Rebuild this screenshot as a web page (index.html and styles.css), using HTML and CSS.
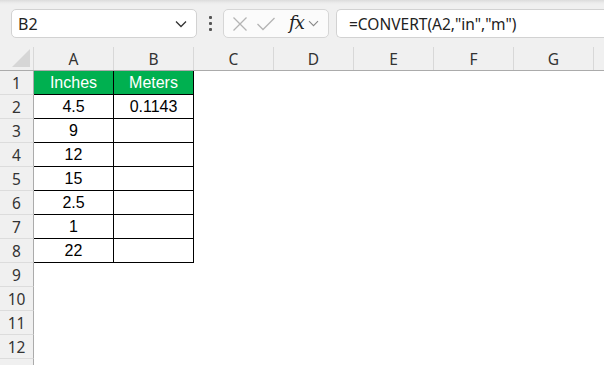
FILE: index.html
```html
<!DOCTYPE html>
<html>
<head>
<meta charset="utf-8">
<link rel="stylesheet" href="styles.css">
</head>
<body>
<div class="topbar">
  <div class="namebox">
    <span class="ref">B2</span>
    <svg class="chev" width="12" height="8" viewBox="0 0 12 8"><path d="M1 1.5 L6 6.5 L11 1.5" fill="none" stroke="#333" stroke-width="1.3"/></svg>
  </div>
  <div class="dots"><i></i><i></i><i></i></div>
  <div class="fxbox">
    <svg class="ico" width="16" height="16" viewBox="0 0 16 16"><path d="M1.5 1.5 L14.5 14.5 M14.5 1.5 L1.5 14.5" stroke="#b4b4b4" stroke-width="1.3" fill="none"/></svg>
    <svg class="ico" width="20" height="16" viewBox="0 0 20 16"><path d="M1.5 8 L7 13.5 L18.5 2" stroke="#b4b4b4" stroke-width="1.3" fill="none"/></svg>
    <span class="fx">fx</span>
    <svg class="chev2" width="11" height="7" viewBox="0 0 11 7"><path d="M1 1.2 L5.5 5.7 L10 1.2" fill="none" stroke="#888" stroke-width="1.1"/></svg>
  </div>
  <div class="formula">=CONVERT(A2,"in","m")</div>
</div>

<div class="sheet">
  <div class="colhead">
    <div class="corner"><svg width="18" height="18" viewBox="0 0 18 18"><path d="M18 0 L18 18 L0 18 Z" fill="#d6d6d6"/></svg></div>
    <div class="col">A</div><div class="col">B</div><div class="col">C</div><div class="col">D</div><div class="col">E</div><div class="col">F</div><div class="col">G</div><div class="col rest"></div>
  </div>

  <div class="row"><div class="rh">1</div><div class="cell ca hdr">Inches</div><div class="cell cb hdr">Meters</div></div>
  <div class="row"><div class="rh">2</div><div class="cell ca">4.5</div><div class="cell cb">0.1143</div></div>
  <div class="row"><div class="rh">3</div><div class="cell ca">9</div><div class="cell cb"></div></div>
  <div class="row"><div class="rh">4</div><div class="cell ca">12</div><div class="cell cb"></div></div>
  <div class="row"><div class="rh">5</div><div class="cell ca">15</div><div class="cell cb"></div></div>
  <div class="row"><div class="rh">6</div><div class="cell ca">2.5</div><div class="cell cb"></div></div>
  <div class="row"><div class="rh">7</div><div class="cell ca">1</div><div class="cell cb"></div></div>
  <div class="row"><div class="rh">8</div><div class="cell ca">22</div><div class="cell cb"></div></div>
  <div class="row"><div class="rh">9</div></div>
  <div class="row"><div class="rh">10</div></div>
  <div class="row"><div class="rh">11</div></div>
  <div class="row"><div class="rh">12</div></div>
  <div class="row"><div class="rh"></div></div>
</div>
</body>
</html>
```

FILE: styles.css
```css
html, body {
  margin: 0;
  padding: 0;
}
body {
  width: 604px;
  height: 365px;
  overflow: hidden;
  background: #ffffff;
  font-family: "Noto Sans", "Open Sans", sans-serif;
}
.topbar {
  height: 47px;
  box-sizing: border-box;
  padding: 9px 0 0 11px;
  display: flex;
  align-items: flex-start;
  background: linear-gradient(#dcdcdc 0px, #ececec 3px, #f0f0f0 5px, #f0f0f0 100%);
  overflow: hidden;
}
.namebox {
  width: 186px;
  height: 29px;
  box-sizing: border-box;
  background: #fff;
  border: 1px solid #d2d2d2;
  border-radius: 5px;
  display: flex;
  align-items: center;
  justify-content: space-between;
  padding: 0 9px 0 6px;
  flex: none;
}
.ref {
  font-size: 16px;
  color: #222;
}
.dots {
  width: 26px;
  height: 29px;
  display: flex;
  flex-direction: column;
  align-items: center;
  justify-content: center;
  gap: 3px;
  flex: none;
}
.dots i {
  display: block;
  width: 3px;
  height: 3px;
  background: #555;
  border-radius: 1px;
}
.fxbox {
  width: 106px;
  height: 29px;
  box-sizing: border-box;
  background: #fbfbfb;
  border: 1px solid #d6d6d6;
  border-radius: 5px;
  display: flex;
  align-items: center;
  padding: 0 0 0 8px;
  gap: 8px;
  flex: none;
}
.fx {
  font-family: "DejaVu Serif", "Liberation Serif", serif;
  font-style: italic;
  font-size: 18px;
  color: #222;
  margin-left: 5px;
  letter-spacing: -1px;
  line-height: 1;
  padding-bottom: 2px;
}
.chev2 {
  margin-left: -4px;
}
.formula {
  margin-left: 7px;
  height: 29px;
  box-sizing: border-box;
  background: #fff;
  border: 1px solid #d2d2d2;
  border-right: none;
  border-radius: 5px 0 0 5px;
  display: flex;
  align-items: center;
  padding-left: 12px;
  font-size: 15.5px;
  color: #222;
  flex: 1;
  min-width: 0;
  white-space: nowrap;
}
.sheet {
  background: #fff;
}
.colhead {
  display: flex;
  height: 24px;
  box-sizing: border-box;
  background: #f0f0f0;
  border-bottom: 1px solid #ababab;
  overflow: hidden;
}
.corner {
  width: 34px;
  box-sizing: border-box;
  border-right: 1px solid #d8d8d8;
  display: flex;
  align-items: flex-end;
  justify-content: flex-end;
  padding: 0 3px 3px 0;
  flex: none;
}
.col {
  width: 80px;
  box-sizing: border-box;
  border-right: 1px solid #d8d8d8;
  display: flex;
  align-items: center;
  justify-content: center;
  font-size: 15.5px;
  color: #333;
  padding-top: 1px;
  flex: none;
}
.col.rest {
  width: 11px;
  border-right: none;
}
.row {
  display: flex;
  height: 24px;
}
.rh {
  width: 34px;
  box-sizing: border-box;
  background: #f0f0f0;
  border-right: 1px solid #ababab;
  border-bottom: 1px solid #dcdcdc;
  display: flex;
  align-items: center;
  justify-content: center;
  font-size: 15.5px;
  color: #333;
  flex: none;
}
.cell {
  width: 80px;
  box-sizing: border-box;
  display: flex;
  align-items: center;
  justify-content: center;
  font-family: "Liberation Sans", Arial, sans-serif;
  font-size: 16px;
  color: #000;
  flex: none;
  border-bottom: 1px solid #000;
  border-right: 1px solid #000;
}
.cell.hdr {
  background: #00b050;
  color: #fff;
}
```
